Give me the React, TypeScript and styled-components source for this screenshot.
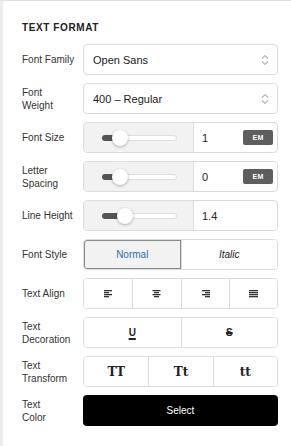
import React, { useState } from 'react';
import styled, { createGlobalStyle, css } from 'styled-components';

const GlobalStyle = createGlobalStyle`
  html, body {
    margin: 0;
    padding: 0;
    background: #ffffff;
  }
  body {
    font-family: "Liberation Sans", Arial, sans-serif;
    color: #333333;
  }
`

// Types

type AlignValue = 'left' | 'center' | 'right' | 'justify'

const AlignIcon: React.FC<{ align: AlignValue }> = ({ align }) => {
  const lines = [8, 5, 8, 5]
  return (
    <svg width="9" height="8" viewBox="0 0 9 8">
      {lines.map((w, i) => {
        const width = align === 'justify' ? 9 : w
        let x = 0
        if (align === 'center') x = (9 - width) / 2
        if (align === 'right') x = 9 - width
        return <rect key={i} x={x} y={i * 2} width={width} height={1.3} fill="#333" />
      })}
    </svg>
  )
}

const Slider: React.FC<{ value: number }> = ({ value }) => (
  <SliderTrack>
    <SliderFill style={{ width: value }} />
    <SliderThumb style={{ left: value - 8 }} />
  </SliderTrack>
)

const App: React.FC = () => {
  const [fontStyle, setFontStyle] = useState<'normal' | 'italic'>('normal')

  return (
    <Wrapper>
      <GlobalStyle />
      <Title>Text Format</Title>
      <Form>
        <Label>Font Family</Label>
        <Select>
          <span>Open Sans</span>
          <Chevrons />
        </Select>

        <Label>Font<br />Weight</Label>
        <Select>
          <span>400 – Regular</span>
          <Chevrons />
        </Select>

        <Label>Font Size</Label>
        <SliderBox>
          <SliderArea><Slider value={17} /></SliderArea>
          <ValueArea>
            <span>1</span>
            <Unit>EM</Unit>
          </ValueArea>
        </SliderBox>

        <Label>Letter<br />Spacing</Label>
        <SliderBox>
          <SliderArea><Slider value={17} /></SliderArea>
          <ValueArea>
            <span>0</span>
            <Unit>EM</Unit>
          </ValueArea>
        </SliderBox>

        <Label>Line Height</Label>
        <SliderBox>
          <SliderArea><Slider value={22} /></SliderArea>
          <ValueArea>
            <span>1.4</span>
          </ValueArea>
        </SliderBox>

        <Label>Font Style</Label>
        <Segmented cols={2}>
          <Segment active={fontStyle === 'normal'} onClick={() => setFontStyle('normal')}>Normal</Segment>
          <Segment active={fontStyle === 'italic'} italic onClick={() => setFontStyle('italic')}>Italic</Segment>
        </Segmented>

        <Label>Text Align</Label>
        <Segmented cols={4}>
          <Segment><AlignIcon align="left" /></Segment>
          <Segment><AlignIcon align="center" /></Segment>
          <Segment><AlignIcon align="right" /></Segment>
          <Segment><AlignIcon align="justify" /></Segment>
        </Segmented>

        <Label>Text<br />Decoration</Label>
        <Segmented cols={2}>
          <Segment><DecoGlyph underline>U</DecoGlyph></Segment>
          <Segment><DecoGlyph>S</DecoGlyph></Segment>
        </Segmented>

        <Label>Text<br />Transform</Label>
        <Segmented cols={3}>
          <Segment><SerifGlyph>TT</SerifGlyph></Segment>
          <Segment><SerifGlyph>Tt</SerifGlyph></Segment>
          <Segment><SerifGlyph>tt</SerifGlyph></Segment>
        </Segmented>

        <Label>Text<br />Color</Label>
        <ColorButton>Select</ColorButton>
      </Form>
    </Wrapper>
  )
}

const Chevrons: React.FC = () => (
  <ChevronIcon width="8" height="12" viewBox="0 0 8 12">
    <path d="M1 4.5 L4 1.5 L7 4.5" fill="none" stroke="#b5b5b5" strokeWidth="1.2" />
    <path d="M1 7.5 L4 10.5 L7 7.5" fill="none" stroke="#b5b5b5" strokeWidth="1.2" />
  </ChevronIcon>
)

const Wrapper = styled.div`
  min-height: 445px;
  border-top: 1px solid #e2e2e2;
  box-shadow: inset 3px 0 0 #ececec;
  padding: 20px 13px 0 22px;
`

const Title = styled.h2`
  margin: 0 0 10px;
  font-size: 10px;
  line-height: 13px;
  font-weight: 700;
  letter-spacing: 0.6px;
  text-transform: uppercase;
  color: #222222;
`

const Form = styled.div`
  display: grid;
  grid-template-columns: 61px 1fr;
  grid-auto-rows: 31px;
  row-gap: 8px;
  align-items: center;
`

const Label = styled.div`
  font-size: 10px;
  line-height: 13px;
  color: #333333;
`

const Box = css`
  height: 31px;
  box-sizing: border-box;
  border: 1px solid #dcdcdc;
  border-radius: 4px;
  background: #ffffff;
`

const Select = styled.div`
  ${Box};
  display: flex;
  align-items: center;
  justify-content: space-between;
  padding: 0 8px 0 9px;
  font-size: 11px;
  color: #222222;
`

const ChevronIcon = styled.svg`
  flex-shrink: 0;
`

const SliderBox = styled.div`
  ${Box};
  display: grid;
  grid-template-columns: 110px 1fr;
  overflow: hidden;
`

const SliderArea = styled.div`
  background: #f2f2f2;
  border-right: 1px solid #dcdcdc;
  display: flex;
  align-items: center;
  padding-left: 18px;
`

const SliderTrack = styled.div`
  position: relative;
  width: 75px;
  height: 6px;
  box-sizing: border-box;
  border: 1px solid #dddddd;
  border-radius: 3px;
  background: #ffffff;
`

const SliderFill = styled.div`
  position: absolute;
  left: -1px;
  top: -1px;
  height: 6px;
  border-radius: 3px 0 0 3px;
  background: #555555;
`

const SliderThumb = styled.div`
  position: absolute;
  top: -6px;
  width: 16px;
  height: 16px;
  border-radius: 50%;
  background: #ffffff;
  box-shadow: 0 1px 3px rgba(0, 0, 0, 0.3);
`

const ValueArea = styled.div`
  display: flex;
  align-items: center;
  justify-content: space-between;
  padding: 0 4px 0 8px;
  font-size: 11px;
  color: #222222;
`

const Unit = styled.span`
  width: 30px;
  height: 15px;
  border-radius: 2px;
  background: #5e5e5e;
  color: #ffffff;
  font-size: 7px;
  font-weight: 700;
  display: flex;
  align-items: center;
  justify-content: center;
  letter-spacing: 0.3px;
`

const Segmented = styled.div<{ cols: number }>`
  ${Box};
  display: grid;
  grid-template-columns: repeat(${({ cols }) => cols}, 1fr);
  overflow: hidden;
`

const Segment = styled.div<{ active?: boolean; italic?: boolean }>`
  display: flex;
  align-items: center;
  justify-content: center;
  font-size: 10px;
  font-style: ${({ italic }) => (italic ? 'italic' : 'normal')};
  color: ${({ active }) => (active ? '#2d6fae' : '#222222')};
  background: ${({ active }) => (active ? '#f2f2f2' : '#ffffff')};
  cursor: pointer;
  & + & {
    border-left: 1px solid #dcdcdc;
  }
  ${({ active }) => active && css`
    box-shadow: inset 0 0 0 1px #8a8a8a;
    border-radius: 3px 0 0 3px;
  `}
`

const DecoGlyph = styled.span<{ underline?: boolean }>`
  font-size: 10px;
  font-weight: 700;
  color: #222222;
  text-decoration: ${({ underline }) => (underline ? 'underline' : 'line-through')};
  text-decoration-thickness: 1.5px;
  text-underline-offset: 2px;
`

const SerifGlyph = styled.span`
  font-family: "DejaVu Serif", "Liberation Serif", serif;
  font-weight: 700;
  font-size: 12px;
  color: #222222;
`

const ColorButton = styled.button`
  height: 31px;
  border: none;
  border-radius: 4px;
  background: #000000;
  color: #ffffff;
  font-family: inherit;
  font-size: 10px;
  font-weight: 500;
  cursor: pointer;
`

export default App;
